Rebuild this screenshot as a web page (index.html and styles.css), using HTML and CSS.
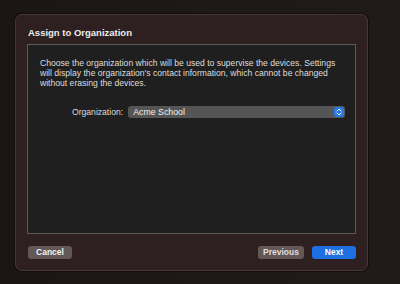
FILE: index.html
```html
<!DOCTYPE html>
<html>
<head>
	<meta charset="utf-8">
	<title>Assign to Organization</title>
	<link rel="stylesheet" href="styles.css">
</head>
<body>
	<div class="sheet">
		<div class="sheet_title">Assign to Organization</div>
		<div class="content_box">
			<p class="intro">Choose the organization which will be used to supervise the devices. Settings will display the organization's contact information, which cannot be changed without erasing the devices.</p>
			<div class="org_row">
				<span class="org_label">Organization:</span>
				<div class="popup">
					<span class="popup_text">Acme School</span>
					<span class="popup_arrows">
						<svg width="6" height="8" viewBox="0 0 6 8">
							<path d="M1 3 L3 1 L5 3 M1 5 L3 7 L5 5" fill="none" stroke="#fff" stroke-width="1" stroke-linecap="round" stroke-linejoin="round"/>
						</svg>
					</span>
				</div>
			</div>
		</div>
		<div class="footer">
			<button class="btn">Cancel</button>
			<div class="spacer"></div>
			<button class="btn btn_prev">Previous</button>
			<button class="btn btn_next">Next</button>
		</div>
	</div>
</body>
</html>
```

FILE: styles.css
```css
*{margin: 0; padding: 0; box-sizing: border-box;}
html, body{height: 100%;}
body{background: linear-gradient(90deg, #1b1513 0%, #201a18 100%); overflow: hidden;
	font-family: "Liberation Sans", Arial, sans-serif; color: #e2e2e2;
	padding: 14px 0 0 15px;}
.sheet{width: 353px; height: 257px; background: #2e2020; border-radius: 7px;
	border: 1px solid #463838; box-shadow: 0 0 0 1px #120d0c;
	display: flex; flex-direction: column; padding: 0 11px 11px;}
.sheet_title{height: 29px; line-height: 35px; font-size: 9.5px; font-weight: bold;
	color: #ececec; padding-left: 1px;}
.content_box{flex: 1; background: #1f1f1f; border: 1px solid #5c5a5a;
	padding: 13px 10px 0 12px;}
.intro{font-size: 8.6px; line-height: 10px; color: #dedede;}
.org_row{display: flex; align-items: center; margin-top: 18px; padding-left: 32px;}
.org_label{font-size: 8.6px; color: #dcdcdc; margin-right: 5px;}
.popup{flex: 1; height: 12px; background: #555; border-radius: 3px;
	display: flex; align-items: center; padding: 0 1px 0 5px;}
.popup_text{flex: 1; font-size: 8.8px; color: #f0f0f0;}
.popup_arrows{width: 10px; height: 10px; background: #2a7ae6; border-radius: 2.5px;
	display: flex; align-items: center; justify-content: center;}
.popup_arrows svg{display: block;}
.footer{display: flex; margin-top: 12px; height: 13px; padding-left: 1px;}
.spacer{flex: 1;}
.btn{width: 44px; height: 13px; border: none; border-radius: 3px; background: #625858;
	color: #f2f2f2; font-family: "Liberation Sans", Arial, sans-serif; font-size: 8.5px;
	font-weight: bold; line-height: 13px;}
.btn_prev{width: 46px; margin-right: 8px; color: #e0dcdc;}
.btn_next{background: #1d6fe2; color: #fff;}
```
